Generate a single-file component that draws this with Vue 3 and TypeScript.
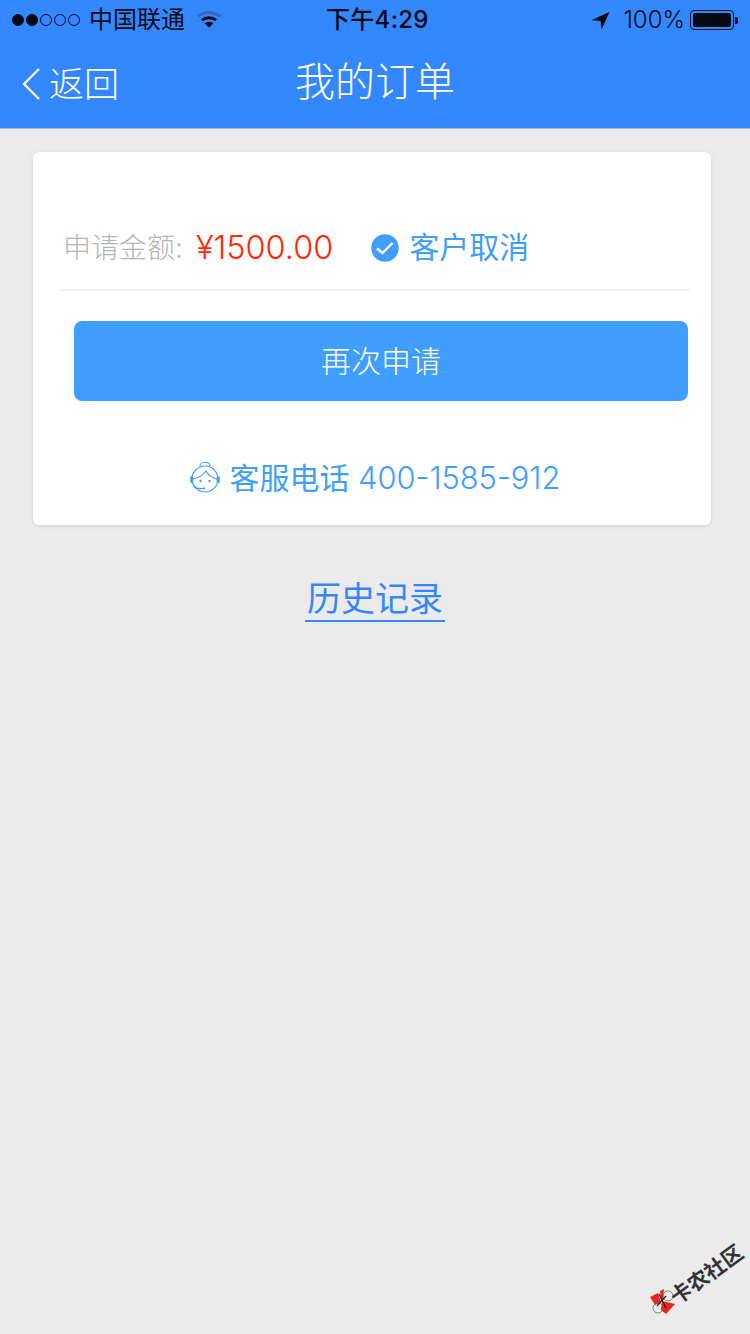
<template>
  <div class="page">
    <header class="top">
      <div class="status">
        <div class="status-left">
          <span class="dots">
            <i v-for="n in 5" :key="n" class="dot" :class="{ on: n <= 2 }"></i>
          </span>
          <span class="carrier">中国联通</span>
          <svg class="wifi" width="24" height="18" viewBox="0 0 24 18">
            <path d="M1 5.5C7 0 17 0 23 5.5" fill="none" stroke="#2f6cc0" stroke-width="3" />
            <path d="M5 9.2C9 6 15 6 19 9.2" fill="none" stroke="#050a14" stroke-width="3" />
            <path d="M7.6 12.2C10.4 10.2 13.6 10.2 16.4 12.2L12 16.6Z" fill="#050a14" />
          </svg>
        </div>
        <span class="time">下午4:29</span>
        <div class="status-right">
          <svg class="arrow" width="19" height="19" viewBox="0 0 19 19">
            <path d="M18.5 1L0.5 9.2L9.6 10L10.6 18.6Z" fill="#050a14" />
          </svg>
          <span class="battery-text">100%</span>
          <span class="battery"><span class="battery-fill"></span></span>
          <span class="battery-tip"></span>
        </div>
      </div>
      <div class="nav">
        <div class="back">
          <svg width="22" height="34" viewBox="0 0 22 34">
            <path d="M19 2L4 17L19 32" fill="none" stroke="#fff" stroke-width="2.2" />
          </svg>
          <span>返回</span>
        </div>
        <div class="title">我的订单</div>
      </div>
    </header>

    <main class="content">
      <section class="card">
        <div class="info">
          <span class="label">申请金额:</span>
          <span class="amount">¥1500.00</span>
          <svg class="check" width="28" height="28" viewBox="0 0 28 28">
            <circle cx="14" cy="14" r="13.8" fill="#409eff" />
            <path d="M6 14.5L11.5 19L21.5 9" fill="none" stroke="#fff" stroke-width="2.4" />
          </svg>
          <span class="state">客户取消</span>
        </div>
        <button class="again">再次申请</button>
        <div class="service">
          <svg class="agent" width="30" height="34" viewBox="0 0 30 34" fill="none" stroke="#409eff" stroke-width="1.2">
            <path d="M10 6C10 1 20 1 20 6" />
            <circle cx="15" cy="19" r="13" />
            <path d="M3 19C8 18 13 15 16 11C18 15 23 18 27 19" />
            <circle cx="10.5" cy="21" r="1.2" fill="#409eff" stroke="none" />
            <circle cx="19.5" cy="21" r="1.2" fill="#409eff" stroke="none" />
            <path d="M3 24C5 29 9 29 13 28.5" />
            <circle cx="14" cy="28.4" r="1.1" fill="#409eff" stroke="none" />
            <rect x="0.2" y="16" width="3.2" height="7" rx="1.6" fill="#409eff" stroke="none" />
            <rect x="26.6" y="16" width="3.2" height="7" rx="1.6" fill="#409eff" stroke="none" />
          </svg>
          <span class="service-text">客服电话 <span class="phone">400-1585-912</span></span>
        </div>
      </section>
      <a class="history">历史记录</a>
    </main>

    <svg class="mark-logo" width="28" height="28" viewBox="0 0 28 28">
      <circle cx="19" cy="8" r="5" fill="none" stroke="#666" stroke-width="0.8" />
      <circle cx="9" cy="20" r="5" fill="none" stroke="#666" stroke-width="0.8" />
      <path d="M1 9L9 5L12 14L6 17Z" fill="#e0281f" />
      <path d="M13 13L26 16L17 26L12 22Z" fill="#e0281f" />
      <path d="M11 3L15 1L14 11L12 12Z" fill="#e0281f" />
      <path d="M10 6L17 20M17 8L8 18" stroke="#222" stroke-width="1.2" />
    </svg>
    <span class="mark-text">卡农社区</span>
  </div>
</template>

<script setup lang="ts">
</script>

<style scoped>
.page {
  position: relative;
  width: 750px;
  height: 1334px;
  overflow: hidden;
  background: #ebebeb;
  font-family: Inter, "Noto Sans CJK SC", sans-serif;
  font-weight: 300;
}

.top {
  height: 128px;
  background: #3388ff;
  border-bottom: 1px solid #b4b4b4;
}

.status {
  position: relative;
  display: flex;
  align-items: center;
  justify-content: space-between;
  height: 40px;
  padding: 0 12px;
  color: #050a14;
}

.status-left,
.status-right {
  display: flex;
  align-items: center;
}

.dots {
  display: flex;
  gap: 2px;
  margin-right: 9px;
}

.dot {
  width: 12px;
  height: 12px;
  box-sizing: border-box;
  border: 1px solid #050a14;
  border-radius: 50%;
}

.dot.on {
  background: #050a14;
}

.carrier {
  font-size: 24px;
  font-weight: 400;
  line-height: 40px;
}

.wifi {
  margin-left: 12px;
}

.time {
  position: absolute;
  left: 326px;
  top: 0;
  font-size: 24px;
  font-weight: 500;
  line-height: 40px;
  letter-spacing: 0.3px;
}

.arrow {
  margin-right: 13px;
}

.battery-text {
  font-size: 24px;
  font-weight: 300;
  line-height: 40px;
  margin-right: 5px;
}

.battery {
  display: block;
  box-sizing: border-box;
  width: 44px;
  height: 20px;
  padding: 2px;
  border: 1px solid #050a14;
  border-radius: 4px;
}

.battery-fill {
  display: block;
  height: 100%;
  background: #050a14;
  border-radius: 2px;
}

.battery-tip {
  width: 3px;
  height: 7px;
  margin-left: 1px;
  background: #050a14;
  border-radius: 0 2px 2px 0;
}

.nav {
  position: relative;
  display: flex;
  align-items: center;
  height: 88px;
  color: #fff;
}

.back {
  display: flex;
  align-items: center;
  gap: 7px;
  margin-left: 20px;
  font-size: 35px;
  line-height: 90px;
}

.title {
  position: absolute;
  left: 0;
  right: 0;
  top: 0;
  text-align: center;
  font-size: 40px;
  line-height: 84px;
}

.content {
  display: flex;
  flex-direction: column;
  align-items: center;
  padding-top: 23px;
}

.card {
  align-self: flex-start;
  width: 678px;
  height: 373px;
  box-sizing: border-box;
  margin-left: 33px;
  padding-top: 62px;
  background: #fff;
  border-radius: 6px;
  box-shadow: 0 1px 4px rgba(0, 0, 0, 0.1);
}

.info {
  display: flex;
  align-items: center;
  height: 77px;
  margin: 0 21px 0 27px;
  padding: 0 0 10px 3px;
  box-sizing: border-box;
  border-bottom: 2px solid #f2f2f2;
}

.label {
  margin-bottom: 2px;
  font-size: 28px;
  color: #b5b5b5;
}

.amount {
  margin: 2px 0 0 13px;
  font-size: 32.5px;
  color: #ff2a00;
}

.check {
  margin-left: 38px;
  margin-top: 3px;
}

.state {
  margin-left: 10px;
  font-size: 30px;
  font-weight: 400;
  line-height: 36px;
  color: #409eff;
}

.again {
  display: block;
  width: 614px;
  height: 80px;
  margin: 30px 0 0 41px;
  padding: 0 0 4px;
  border: 0;
  border-radius: 8px;
  background: #409eff;
  color: #fff;
  font-family: inherit;
  font-size: 30px;
  font-weight: 300;
}

.service {
  display: flex;
  align-items: center;
  justify-content: center;
  gap: 10px;
  margin-top: 57px;
  margin-left: 6px;
  font-size: 30px;
  font-weight: 400;
  line-height: 36px;
  color: #409eff;
}

.service-text {
  margin-top: 2px;
}

.phone {
  font-size: 30.8px;
  font-weight: 300;
}

.history {
  margin-top: 53px;
  padding: 0 2px;
  font-size: 34px;
  font-weight: 400;
  line-height: 42px;
  color: #3388ff;
  border-bottom: 2px solid #3388ff;
}

.mark-logo {
  position: absolute;
  left: 649px;
  top: 1288px;
}

.mark-text {
  position: absolute;
  left: 665px;
  top: 1261px;
  width: 84px;
  transform: rotate(-36deg);
  font-size: 21px;
  font-weight: 700;
  line-height: 28px;
  color: #333;
  white-space: nowrap;
}
</style>

<style>
html,
body {
  margin: 0;
  background: #ebebeb;
}
</style>
